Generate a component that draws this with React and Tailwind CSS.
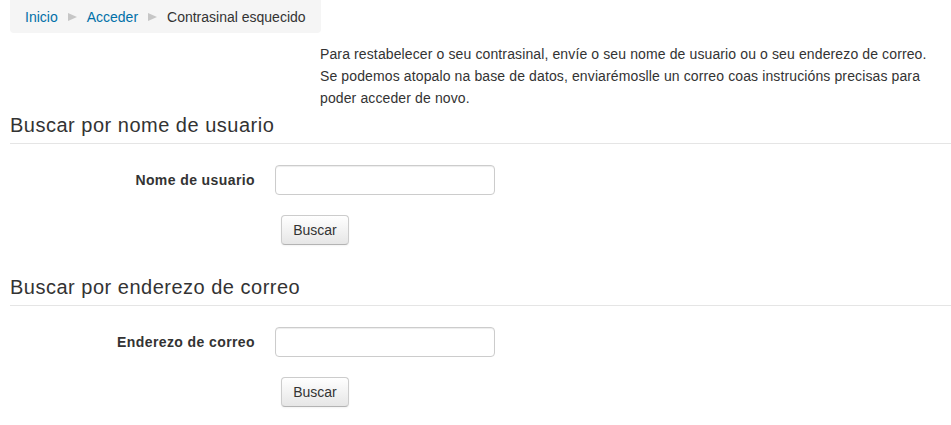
import React from 'react';

function Arrow() {
  return (
    <svg width="9" height="8" viewBox="0 0 9 8" className="mx-[10px] shrink-0">
      <polygon points="0,0 9,4 0,8" fill="#c6c6c6" />
    </svg>
  );
}

function SearchSection({ title, label, first }) {
  return (
    <section className={first ? 'mt-[4px]' : 'mt-[30px]'}>
      <h2 className="text-[20px] leading-[24px] tracking-[0.5px] pb-[6px] border-b border-[#e5e5e5] font-normal text-[#333]">
        {title}
      </h2>
      <div className="mt-[21px] flex items-center">
        <label className="w-[245px] text-right font-bold leading-[20px] tracking-[0.4px]">{label}</label>
        <input
          type="text"
          className="ml-[20px] w-[220px] h-[30px] border border-[#cccccc] rounded-[4px] bg-white px-[6px] shadow-[inset_0_1px_1px_rgba(0,0,0,0.075)] outline-none"
        />
      </div>
      <div className="mt-[20px] pl-[271px]">
        <button className="h-[30px] w-[68px] rounded-[4px] border border-[#cccccc] border-b-[#b3b3b3] bg-gradient-to-b from-white to-[#e6e6e6] text-[14px] leading-[20px] text-[#333] shadow-[inset_0_1px_0_rgba(255,255,255,0.2),0_1px_2px_rgba(0,0,0,0.05)]">
          Buscar
        </button>
      </div>
    </section>
  );
}

export default function App() {
  return (
    <div className="min-h-screen bg-white text-[#333] text-[14px] font-['Liberation_Sans',Arial,sans-serif]">
      <div className="pl-[10px]">
        {/* Breadcrumb */}
        <nav className="inline-flex items-center h-[33px] px-[15px] bg-[#f5f5f5] rounded-b-[4px] leading-[20px]">
          <a href="#" className="text-[#0070a8]">Inicio</a>
          <Arrow />
          <a href="#" className="text-[#0070a8]">Acceder</a>
          <Arrow />
          <span>Contrasinal esquecido</span>
        </nav>

        {/* Instructions */}
        <p className="mt-[10px] ml-[310px] w-[620px] leading-[22px] tracking-[0.12px]">
          Para restabelecer o seu contrasinal, envíe o seu nome de usuario ou o seu enderezo de correo.
          Se podemos atopalo na base de datos, enviarémoslle un correo coas instrucións precisas para
          poder acceder de novo.
        </p>

        <SearchSection first title="Buscar por nome de usuario" label="Nome de usuario" />
        <SearchSection title="Buscar por enderezo de correo" label="Enderezo de correo" />
      </div>
    </div>
  );
}
